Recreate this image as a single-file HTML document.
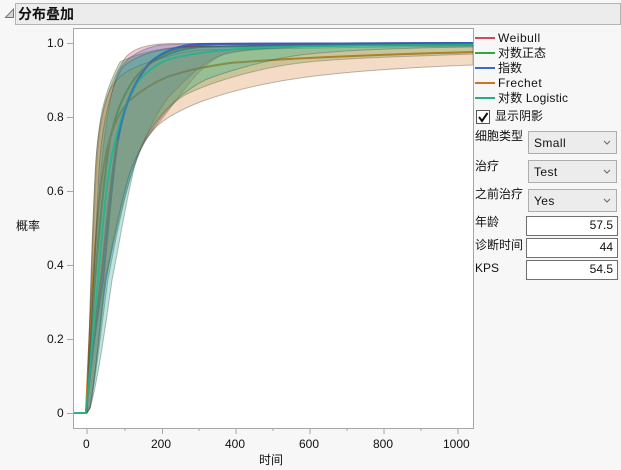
<!DOCTYPE html>
<html><head><meta charset="utf-8">
<style>
html,body{margin:0;padding:0;background:#f7f7f7;}
body{width:621px;height:470px;position:relative;overflow:hidden;font-family:"Liberation Sans","Noto Sans CJK SC",sans-serif;font-size:12px;color:#111;}
.a{position:absolute;white-space:nowrap;line-height:14px;}
.hdr{position:absolute;left:15px;top:3px;width:604px;height:20px;background:#ececec;border:1px solid #b4b4b4;}
.sel{position:absolute;left:528px;width:87px;background:#ececec;border:1px solid #adadad;}
.sel span{position:absolute;left:5px;top:4px;line-height:14px;letter-spacing:.4px;}
.sel svg{position:absolute;right:5px;top:8px;}
.inp{position:absolute;left:526px;width:90px;height:18px;background:#fff;border:1px solid #707070;text-align:right;line-height:17px;}
.inp span{margin-right:4px;}
</style></head><body>
<div class="hdr"></div>
<svg class="a" style="left:4px;top:7px" width="12" height="12"><path d="M9.500 2L9.500 10.500H1.500Z" fill="#d4d4d4" stroke="#757575"/></svg>
<div class="a" style="left:18px;top:6px;font-size:14px;font-weight:bold;line-height:16px">分布叠加</div>

<svg class="a" style="left:0;top:0" width="621" height="470">
<rect x="73.500" y="28.500" width="400" height="400" fill="#fff"/>
<clipPath id="c"><rect x="74" y="29" width="399" height="399"/></clipPath>
<g clip-path="url(#c)" fill="none" stroke-width="2" stroke-linejoin="round">
<path stroke="#c8374f" d="M73 413H86C92 350 97 310 102 270C107 220 112 170 118 135C125 100 138 75 150 62C165 50 185 45 220 44L473 43"/>
<path stroke="#35a03c" d="M73 413H86C89 370 92 320 95 280C100 220 105 170 110 140C116 110 125 92 135 78C147 62 170 50 200 47C250 45.500 350 45.500 473 45"/>
<path stroke="#2f5fd0" d="M73 413H86C92 350 97 320 103 280C108 230 113 170 118 140C124 105 135 80 150 63C163 50 180 45 200 44L473 43"/>
<path stroke="#cc7420" d="M73 413H86C88 370 90 320 93 280C97 220 100 180 107 150C112 128 120 110 130 100C142 90 155 82 167 77C185 71 197 68 230 63C300 57 400 54 473 52"/>
</g>
<g clip-path="url(#c)" stroke="rgba(70,70,70,.36)" stroke-width="1">
<path fill="rgba(200,55,85,.27)" d="M87 413C90 340 92 240 97 160C100 115 108 85 125 58C133 48 148 44 170 43.500L473 43V44C400 44.500 340 45 300 46.500C265 48 240 50 225 54C205 60 185 88 165 115C155 128 148 135 140 148C130 168 122 200 114 235C109 260 106 280 103 300C98 345 94 385 90 408Z"/>
<path fill="rgba(50,160,55,.3)" d="M87 413C89 340 92 230 96 160C99 115 105 90 120 62C132 56 150 50 175 47.500L300 45 473 44V54C420 56 340 58 300 63C265 67 215 80 185 95C170 104 158 120 148 136C132 162 120 210 106 280C100 330 95 380 90 405Z"/>
<path fill="rgba(60,100,205,.28)" d="M87 413C90 350 95 240 101 170C105 125 110 95 117 75C122 62 135 50 160 45L200 43.500 473 43V44C400 44.500 340 45 300 47C265 49 240 50 230 53C215 55 195 68 168 98C160 108 152 122 140 150C130 172 118 225 108 280C101 330 95 385 90 408Z"/>
<path fill="rgba(215,125,50,.28)" d="M87 413C89 340 92 220 96 160C99 120 105 95 115 82C125 70 140 65 150 62C165 57 185 51 200 50C280 48 400 47 473 46V65C420 67 350 71 300 78C265 83 230 91 200 102C180 110 165 118 155 128C146 138 138 152 130 172C122 197 114 240 105 280C100 320 95 385 90 408Z"/>
<path fill="rgba(35,175,140,.3)" d="M87 413C90 350 94 260 99 170C102 125 110 90 122 68C132 58 148 51 180 47L300 44.500 473 43.500V47C400 48 340 50 300 55C265 60 225 72 205 80C185 90 165 108 150 130C144 140 139 150 135 165C127 195 120 240 112 280C105 330 97 385 90 408Z"/>
</g>
<path clip-path="url(#c)" fill="none" stroke="#1fb58e" stroke-width="2" stroke-opacity=".85" d="M73 413H86C90 370 94 320 98 280C103 220 107 180 112 155C118 125 125 105 137 83C147 70 160 62 170 59C185 55 200 52 250 48C300 46 400 45 473 44.500"/>
<path clip-path="url(#c)" fill="none" stroke="#2f66d0" stroke-width="2" stroke-opacity=".55" d="M118 140C124 105 135 80 150 63C163 50 180 45 200 44L473 43"/>
<rect x="73.500" y="28.500" width="400" height="400" fill="none" stroke="#a6a6a6"/>
<g stroke="#a6a6a6" fill="none">
<path d="M67 43.500H73M67 117.500H73M67 191.500H73M67 265.500H73M67 339.500H73M67 413.500H73"/>
<path d="M87 429V434M125 429V431M162.500 429V434M199 429V431M236 429V434M273 429V431M310 429V434M347 429V431M384 429V434M421 429V431M458 429V434"/>
</g>
<g stroke-width="2">
<path stroke="#d04a5e" d="M475 38H495"/>
<path stroke="#35a83c" d="M475 53H495"/>
<path stroke="#3c69cc" d="M475 68H495"/>
<path stroke="#c8752a" d="M475 83H495"/>
<path stroke="#25ad8a" d="M475 98H495"/>
</g>
<rect x="476.500" y="110.500" width="13" height="13" fill="#fff" stroke="#555"/>
<path d="M479 117L482 121 487.500 113" fill="none" stroke="#111" stroke-width="2"/>
</svg>

<div class="a" style="left:47px;top:36px">1.0</div>
<div class="a" style="left:47px;top:110px">0.8</div>
<div class="a" style="left:47px;top:184px">0.6</div>
<div class="a" style="left:47px;top:258px">0.4</div>
<div class="a" style="left:47px;top:332px">0.2</div>
<div class="a" style="left:57px;top:406px">0</div>
<div class="a" style="left:16px;top:219px">概率</div>
<div class="a" style="left:83px;top:437px">0</div>
<div class="a" style="left:151px;top:437px">200</div>
<div class="a" style="left:225px;top:437px">400</div>
<div class="a" style="left:299px;top:437px">600</div>
<div class="a" style="left:373px;top:437px">800</div>
<div class="a" style="left:443px;top:437px">1000</div>
<div class="a" style="left:259px;top:453px">时间</div>

<div class="a" style="left:498px;top:31px;letter-spacing:.5px">Weibull</div>
<div class="a" style="left:498px;top:46px">对数正态</div>
<div class="a" style="left:498px;top:61px">指数</div>
<div class="a" style="left:498px;top:76px;letter-spacing:.5px">Frechet</div>
<div class="a" style="left:498px;top:91px;letter-spacing:.2px">对数 Logistic</div>
<div class="a" style="left:495px;top:109px">显示阴影</div>

<div class="a" style="left:475px;top:129px">细胞类型</div>
<div class="a" style="left:475px;top:159px">治疗</div>
<div class="a" style="left:475px;top:187px">之前治疗</div>
<div class="a" style="left:475px;top:215px">年龄</div>
<div class="a" style="left:475px;top:238px">诊断时间</div>
<div class="a" style="left:475px;top:261px">KPS</div>

<div class="sel" style="top:131px;height:21px"><span>Small</span><svg width="8" height="6"><path d="M1 1L4 4 7 1" fill="none" stroke="#666"/></svg></div>
<div class="sel" style="top:160px;height:21px"><span>Test</span><svg width="8" height="6"><path d="M1 1L4 4 7 1" fill="none" stroke="#666"/></svg></div>
<div class="sel" style="top:189px;height:21px"><span>Yes</span><svg width="8" height="6"><path d="M1 1L4 4 7 1" fill="none" stroke="#666"/></svg></div>
<div class="inp" style="top:216px"><span>57.5</span></div>
<div class="inp" style="top:238px"><span>44</span></div>
<div class="inp" style="top:260px"><span>54.5</span></div>
</body></html>
